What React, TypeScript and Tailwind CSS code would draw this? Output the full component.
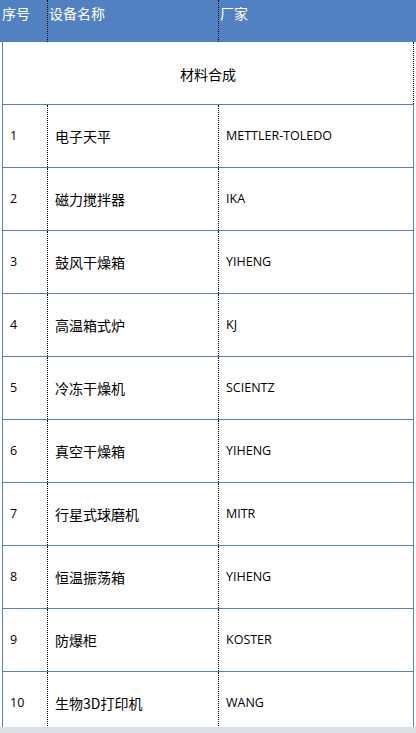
const rows = [
  { no: "1", name: "电子天平", maker: "METTLER-TOLEDO" },
  { no: "2", name: "磁力搅拌器", maker: "IKA" },
  { no: "3", name: "鼓风干燥箱", maker: "YIHENG" },
  { no: "4", name: "高温箱式炉", maker: "KJ" },
  { no: "5", name: "冷冻干燥机", maker: "SCIENTZ" },
  { no: "6", name: "真空干燥箱", maker: "YIHENG" },
  { no: "7", name: "行星式球磨机", maker: "MITR" },
  { no: "8", name: "恒温振荡箱", maker: "YIHENG" },
  { no: "9", name: "防爆柜", maker: "KOSTER" },
  { no: "10", name: "生物3D打印机", maker: "WANG" },
];

const cjk = "font-['Noto_Sans_CJK_SC','Noto_Sans',sans-serif]";
const latin = "font-['Open_Sans','Liberation_Sans',sans-serif]";

export default function App() {
  return (
    <div className="w-[416px] h-[733px] bg-white overflow-hidden">
      <div className="h-[727px] overflow-hidden">
        {/* header */}
        <div className={`flex h-[42px] bg-[#5181c0] text-white text-[14px] leading-none ${cjk}`}>
          <div className="w-[47px] pl-[2px] pt-[6px]">序号</div>
          <div className="w-[171px] pl-[1px] pt-[6px] border-l border-dotted border-black">设备名称</div>
          <div className="flex-1 pl-[1px] pt-[6px] border-l border-dotted border-black">厂家</div>
        </div>

        <div className="ml-[2px] w-[412px] border-l border-[#5b7fb0]">
          {/* section title */}
          <div className="h-[63px] border-b border-[#5b7fb0]">
            <div className={`flex h-full items-center justify-center border-r border-dotted border-black text-[14px] text-black ${cjk}`}>
              <span className="pt-[2px]">材料合成</span>
            </div>
          </div>

          {rows.map((r) => (
            <div key={r.no} className="flex h-[63px] border-b border-r border-[#5b7fb0]">
              <div className={`w-[44px] shrink-0 flex items-center pl-[7px] text-[12.5px] text-black ${latin}`}>
                {r.no}
              </div>
              <div className={`w-[171px] shrink-0 flex items-center pl-[7px] border-l border-dotted border-black text-[14px] text-black ${cjk}`}>
                {r.name}
              </div>
              <div className={`flex-1 flex items-center pl-[7px] border-l border-dotted border-black text-[12.5px] text-black ${latin}`}>
                {r.maker}
              </div>
            </div>
          ))}
        </div>
      </div>
      <div className="h-[6px] bg-[#dde1e7]" />
    </div>
  );
}
